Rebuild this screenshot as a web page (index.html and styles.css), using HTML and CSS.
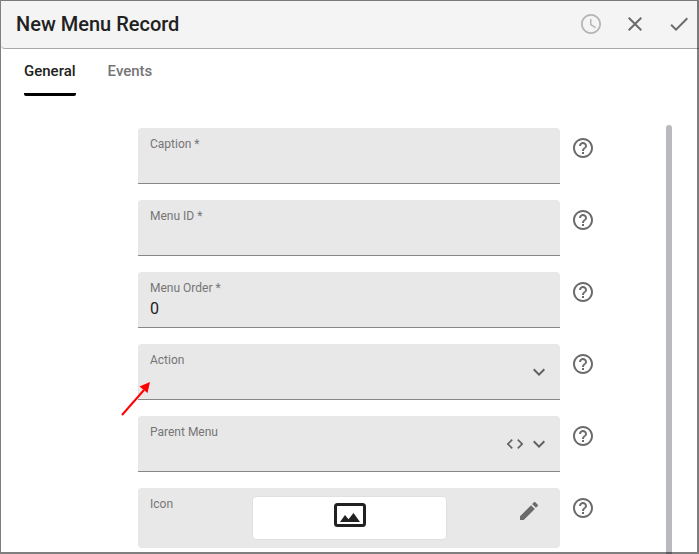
FILE: index.html
```html
<!DOCTYPE html>
<html lang="en">
<head>
    <meta charset="UTF-8">
    <meta name="viewport" content="width=device-width, initial-scale=1.0">
    <title>New Menu Record</title>
    <link rel="stylesheet" href="styles.css">
</head>
<body>
    <!-- shared icons -->
    <svg class="icon-defs" aria-hidden="true">
        <symbol id="help" viewBox="0 0 24 24">
            <path d="M11 18h2v-2h-2v2zm1-16C6.48 2 2 6.48 2 12s4.48 10 10 10 10-4.48 10-10S17.520 2 12 2zm0 18c-4.410 0-8-3.590-8-8s3.590-8 8-8 8 3.590 8 8-3.590 8-8 8zm0-14c-2.210 0-4 1.790-4 4h2c0-1.100.9-2 2-2s2 .9 2 2c0 2-3 1.750-3 5h2c0-2.250 3-2.500 3-5 0-2.210-1.790-4-4-4z"/>
        </symbol>
        <symbol id="chevron" viewBox="0 0 24 24">
            <path d="M16.590 8.590L12 13.170 7.410 8.590 6 10l6 6 6-6z"/>
        </symbol>
    </svg>

    <header class="dialog-header">
        <h1>New Menu Record</h1>
        <div class="header-actions">
            <button type="button" class="icon-button" aria-label="History" disabled>
                <svg viewBox="0 0 24 24"><path d="M12 2C6.500 2 2 6.500 2 12s4.500 10 10 10 10-4.500 10-10S17.500 2 12 2zm0 18.200c-4.500 0-8.200-3.700-8.200-8.200S7.500 3.800 12 3.800s8.200 3.700 8.200 8.200-3.700 8.200-8.200 8.200zM12.500 7H11v6l5.200 3.200.8-1.300-4.500-2.700z"/></svg>
            </button>
            <button type="button" class="icon-button" aria-label="Close">
                <svg viewBox="0 0 24 24"><path d="M19 6.410L17.590 5 12 10.590 6.410 5 5 6.410 10.590 12 5 17.590 6.410 19 12 13.410 17.590 19 19 17.590 13.410 12z"/></svg>
            </button>
            <button type="button" class="icon-button" aria-label="Save">
                <svg viewBox="0 0 24 24"><path d="M9 16.170L4.830 12l-1.420 1.410L9 19 21 7l-1.410-1.410z"/></svg>
            </button>
        </div>
    </header>

    <nav class="tabs">
        <button type="button" class="tab active">General</button>
        <button type="button" class="tab">Events</button>
    </nav>

    <main class="content">
        <form class="record-form">
            <div class="row">
                <div class="field">
                    <label for="caption">Caption *</label>
                    <input type="text" id="caption">
                </div>
                <button type="button" class="icon-button help" aria-label="Help"><svg><use href="#help"/></svg></button>
            </div>

            <div class="row">
                <div class="field">
                    <label for="menuId">Menu ID *</label>
                    <input type="text" id="menuId">
                </div>
                <button type="button" class="icon-button help" aria-label="Help"><svg><use href="#help"/></svg></button>
            </div>

            <div class="row">
                <div class="field">
                    <label for="menuOrder">Menu Order *</label>
                    <input type="text" id="menuOrder" value="0">
                </div>
                <button type="button" class="icon-button help" aria-label="Help"><svg><use href="#help"/></svg></button>
            </div>

            <div class="row">
                <div class="field">
                    <label for="action">Action</label>
                    <select id="action"><option></option></select>
                    <div class="field-icons">
                        <svg><use href="#chevron"/></svg>
                    </div>
                </div>
                <button type="button" class="icon-button help" aria-label="Help"><svg><use href="#help"/></svg></button>
                <svg class="pointer" viewBox="0 0 32 36" aria-hidden="true">
                    <path d="M2 35L24 10" fill="none" stroke="#f00" stroke-width="2"/>
                    <path d="M30 2L27.500 13 19.500 6.500z" fill="#f00"/>
                </svg>
            </div>

            <div class="row">
                <div class="field">
                    <label for="parentMenu">Parent Menu</label>
                    <select id="parentMenu"><option></option></select>
                    <div class="field-icons">
                        <svg class="code" viewBox="0 0 24 24"><path d="M9.400 16.600L4.800 12l4.600-4.600L8 6l-6 6 6 6 1.400-1.400zm5.200 0l4.600-4.600-4.600-4.600L16 6l6 6-6 6-1.400-1.400z"/></svg>
                        <svg><use href="#chevron"/></svg>
                    </div>
                </div>
                <button type="button" class="icon-button help" aria-label="Help"><svg><use href="#help"/></svg></button>
            </div>

            <div class="row">
                <div class="field icon-field">
                    <span class="icon-label">Icon</span>
                    <div class="icon-preview">
                        <svg viewBox="0 0 32 24">
                            <rect x="1.500" y="1.500" width="29" height="21" rx="2" fill="none" stroke="#212121" stroke-width="3"/>
                            <path d="M6 19l5-7 3.500 4.200L19.500 10l6.500 9z" fill="#212121"/>
                        </svg>
                    </div>
                    <button type="button" class="icon-button edit" aria-label="Edit icon">
                        <svg viewBox="0 0 24 24"><path d="M3 17.250V21h3.750L17.810 9.940l-3.750-3.750L3 17.250zM20.710 7.040c.39-.39.39-1.020 0-1.410l-2.340-2.340c-.39-.39-1.020-.39-1.410 0l-1.830 1.830 3.750 3.750 1.830-1.830z"/></svg>
                    </button>
                </div>
                <button type="button" class="icon-button help" aria-label="Help"><svg><use href="#help"/></svg></button>
            </div>
        </form>
        <div class="scrollbar"></div>
    </main>
</body>
</html>
```

FILE: styles.css
```css
* {
    box-sizing: border-box;
}

body {
    margin: 0;
    height: 100vh;
    display: flex;
    flex-direction: column;
    overflow: hidden;
    font-family: Roboto, Arial, sans-serif;
    background-color: #fff;
    color: #212121;
}

/* window outline, drawn over everything */
body::after {
    content: "";
    position: fixed;
    inset: 0;
    border: 1px solid rgba(0, 0, 0, 0.5);
    border-right-width: 2px;
    border-bottom-width: 2px;
    pointer-events: none;
}

.icon-defs {
    display: none;
}

button,
input,
select {
    font-family: inherit;
    margin: 0;
    padding: 0;
    border: none;
    background: none;
}

svg {
    display: block;
    fill: currentColor;
}

.dialog-header {
    display: flex;
    align-items: center;
    justify-content: space-between;
    flex-shrink: 0;
    height: 49px;
    margin-left: 1px;
    padding: 0 8px 0 15px;
    background-color: #f4f4f4;
    border-bottom: 1px solid #aaa;
    border-bottom-left-radius: 4px;
}

.dialog-header h1 {
    margin: 0;
    font-size: 20px;
    line-height: 24px;
    font-weight: 500;
}

.header-actions {
    display: flex;
    gap: 20px;
}

.icon-button {
    width: 24px;
    height: 24px;
    flex-shrink: 0;
    color: #6b6b6b;
    cursor: pointer;
}

.icon-button svg {
    width: 24px;
    height: 24px;
}

.icon-button:disabled {
    color: #b5b5b5;
    cursor: default;
}

.tabs {
    display: flex;
    flex-shrink: 0;
    gap: 32px;
    padding: 0 24px;
}

.tab {
    height: 47px;
    font-size: 15px;
    line-height: 20px;
    font-weight: 500;
    color: #757575;
    border-bottom: 3px solid transparent;
    cursor: pointer;
}

.tab.active {
    color: #212121;
    border-bottom-color: #000;
    border-radius: 2px;
}

.content {
    display: flex;
    flex: 1;
    min-height: 0;
    padding: 29px 27px 0 138px;
}

.record-form {
    display: flex;
    flex-direction: column;
    gap: 16px;
    flex: 1;
    padding: 3px 71px 0 0;
}

.row {
    display: flex;
    gap: 11px;
    position: relative;
}

.help {
    margin-top: 8px;
}

.field {
    position: relative;
    flex: 1;
    height: 56px;
    padding-top: 8px;
    background-color: #e8e8e8;
    border-bottom: 1px solid #888;
    border-radius: 4px 4px 0 0;
}

.field label,
.icon-label {
    display: block;
    padding-left: 12px;
    font-size: 12px;
    line-height: 16px;
    color: #757575;
}

.field input,
.field select {
    display: block;
    width: 100%;
    height: 24px;
    margin-top: 1px;
    padding: 0 12px;
    font-size: 16px;
    line-height: 24px;
    color: #212121;
    appearance: none;
    outline: none;
}

.field-icons {
    position: absolute;
    top: 16px;
    right: 9px;
    display: flex;
    align-items: center;
    gap: 2px;
    color: #616161;
    pointer-events: none;
}

.field-icons svg {
    width: 24px;
    height: 24px;
}

.field-icons .code {
    width: 20px;
    height: 20px;
}

.icon-field {
    display: grid;
    grid-template-columns: 114px 1fr 113px;
    align-items: start;
    height: 60px;
    border-bottom: none;
    border-radius: 4px;
}

.icon-preview {
    display: flex;
    justify-content: center;
    height: 44px;
    padding-top: 6px;
    background-color: #fff;
    border: 1px solid #e0e0e0;
    border-radius: 4px;
}

.icon-preview svg {
    width: 32px;
    height: 24px;
}

.edit {
    justify-self: end;
    margin: 3px 19px 0 0;
}

/* red arrow calling out the Action field */
.pointer {
    position: absolute;
    top: 36px;
    left: -18px;
    width: 32px;
    height: 36px;
}

.scrollbar {
    width: 6px;
    background-color: #bab9c0;
    border-radius: 3px 3px 0 0;
}
```
